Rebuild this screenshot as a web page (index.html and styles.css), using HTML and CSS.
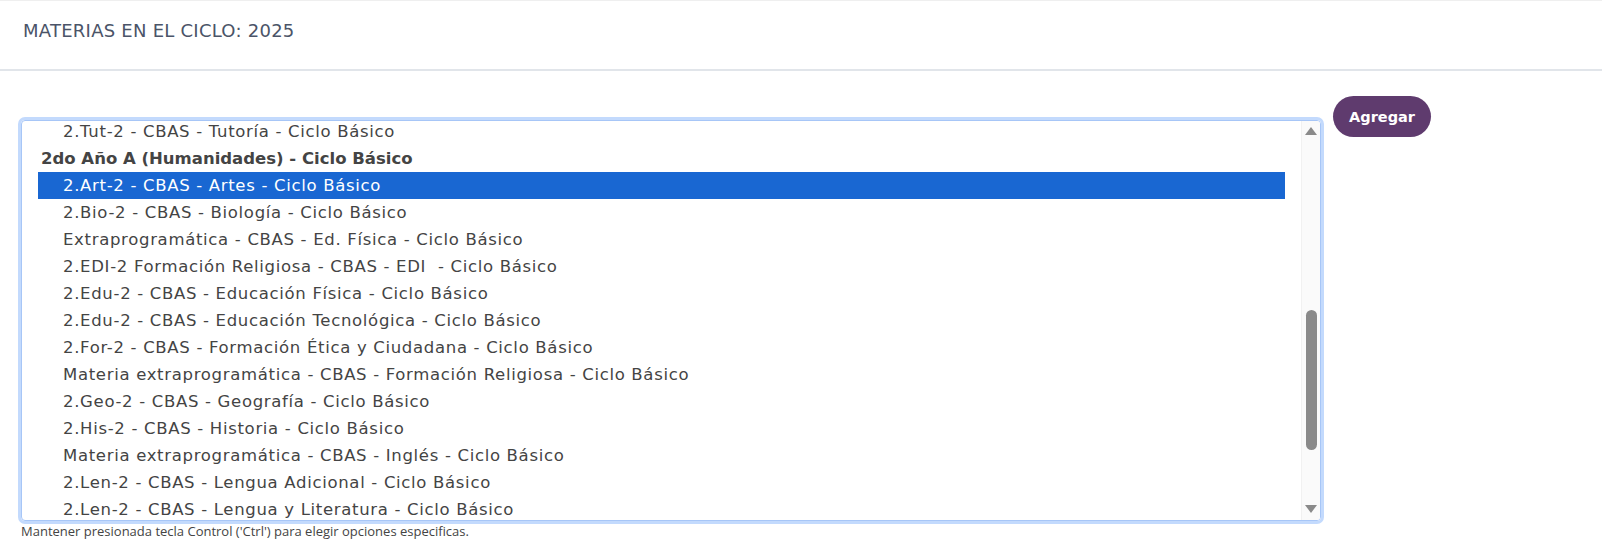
FILE: index.html
```html
<!DOCTYPE html>
<html lang="es">
<head>
<meta charset="utf-8">
<title>Materias en el ciclo</title>
<link rel="stylesheet" href="styles.css">
</head>
<body>
<header class="header">
  <h1 class="title">MATERIAS EN EL CICLO: 2025</h1>
</header>
<main class="main">
  <div class="field">
    <div class="select">
      <div class="list">
        <div class="opt">2.Tut-2 - CBAS - Tutoría - Ciclo Básico</div>
        <div class="group">2do Año A (Humanidades) - Ciclo Básico</div>
        <div class="opt selected">2.Art-2 - CBAS - Artes - Ciclo Básico</div>
        <div class="opt">2.Bio-2 - CBAS - Biología - Ciclo Básico</div>
        <div class="opt">Extraprogramática - CBAS - Ed. Física - Ciclo Básico</div>
        <div class="opt">2.EDI-2 Formación Religiosa - CBAS - EDI  - Ciclo Básico</div>
        <div class="opt">2.Edu-2 - CBAS - Educación Física - Ciclo Básico</div>
        <div class="opt">2.Edu-2 - CBAS - Educación Tecnológica - Ciclo Básico</div>
        <div class="opt">2.For-2 - CBAS - Formación Ética y Ciudadana - Ciclo Básico</div>
        <div class="opt">Materia extraprogramática - CBAS - Formación Religiosa - Ciclo Básico</div>
        <div class="opt">2.Geo-2 - CBAS - Geografía - Ciclo Básico</div>
        <div class="opt">2.His-2 - CBAS - Historia - Ciclo Básico</div>
        <div class="opt">Materia extraprogramática - CBAS - Inglés - Ciclo Básico</div>
        <div class="opt">2.Len-2 - CBAS - Lengua Adicional - Ciclo Básico</div>
        <div class="opt">2.Len-2 - CBAS - Lengua y Literatura - Ciclo Básico</div>
      </div>
      <div class="scrollbar">
        <span class="arrow up"></span>
        <span class="thumb"></span>
        <span class="arrow down"></span>
      </div>
    </div>
    <p class="hint">Mantener presionada tecla Control ('Ctrl') para elegir opciones especificas.</p>
  </div>
  <button class="btn" type="button">Agregar</button>
</main>
</body>
</html>
```
FILE: styles.css
```css
* { box-sizing: border-box; }
html, body { margin: 0; padding: 0; background: #fff; }
body {
  font-family: "DejaVu Sans", "Open Sans", sans-serif;
  color: #444;
}
.header {
  height: 71px;
  border-top: 1px solid #efefef;
  border-bottom: 2px solid #e1e5ea;
  padding: 19px 0 0 23px;
}
.title {
  margin: 0;
  font-size: 18px;
  line-height: 21px;
  font-weight: 400;
  letter-spacing: 0.25px;
  color: #4b5468;
}
.main {
  display: flex;
  align-items: flex-start;
  padding: 25px 0 0 21px;
}
.field { display: flex; flex-direction: column; }
.select {
  margin-top: 24px;
  width: 1300px;
  height: 401px;
  border: 1px solid #a7c6f7;
  border-radius: 4px;
  box-shadow: 0 0 0 3px #c3dafd;
  display: flex;
  overflow: hidden;
}
.list {
  flex: 1;
  padding: 0 16px;
  margin-top: -3px;
  font-size: 16.5px;
  letter-spacing: 0.68px;
}
.opt, .group {
  height: 27px;
  line-height: 27px;
  white-space: pre;
}
.opt { padding-left: 25px; }
.group { padding-left: 3px; font-weight: 700; letter-spacing: 0px; }
.selected { background: #1967d2; color: #fff; }
.scrollbar {
  width: 19px;
  background: #fafafa;
  border-left: 1px solid #f1f1f1;
  position: relative;
}
.arrow {
  position: absolute;
  left: 3px;
  width: 0; height: 0;
  border-left: 6px solid transparent;
  border-right: 6px solid transparent;
}
.arrow.up { top: 6px; border-bottom: 8px solid #8a8a8a; }
.arrow.down { bottom: 7px; border-top: 8px solid #8a8a8a; }
.thumb {
  position: absolute;
  left: 4px;
  top: 189px;
  width: 11px;
  height: 140px;
  border-radius: 6px;
  background: #8a8a8a;
}
.hint {
  margin: 1px 0 0;
  font-family: "Open Sans", sans-serif;
  font-size: 13px;
  color: #444;
}
.btn {
  margin-left: 12px;
  height: 41px;
  width: 98px;
  border: none;
  border-radius: 21px;
  background: #5f3b6e;
  color: #fff;
  font-family: inherit;
  font-size: 14.5px;
  font-weight: 700;
  padding: 0;
}
```
